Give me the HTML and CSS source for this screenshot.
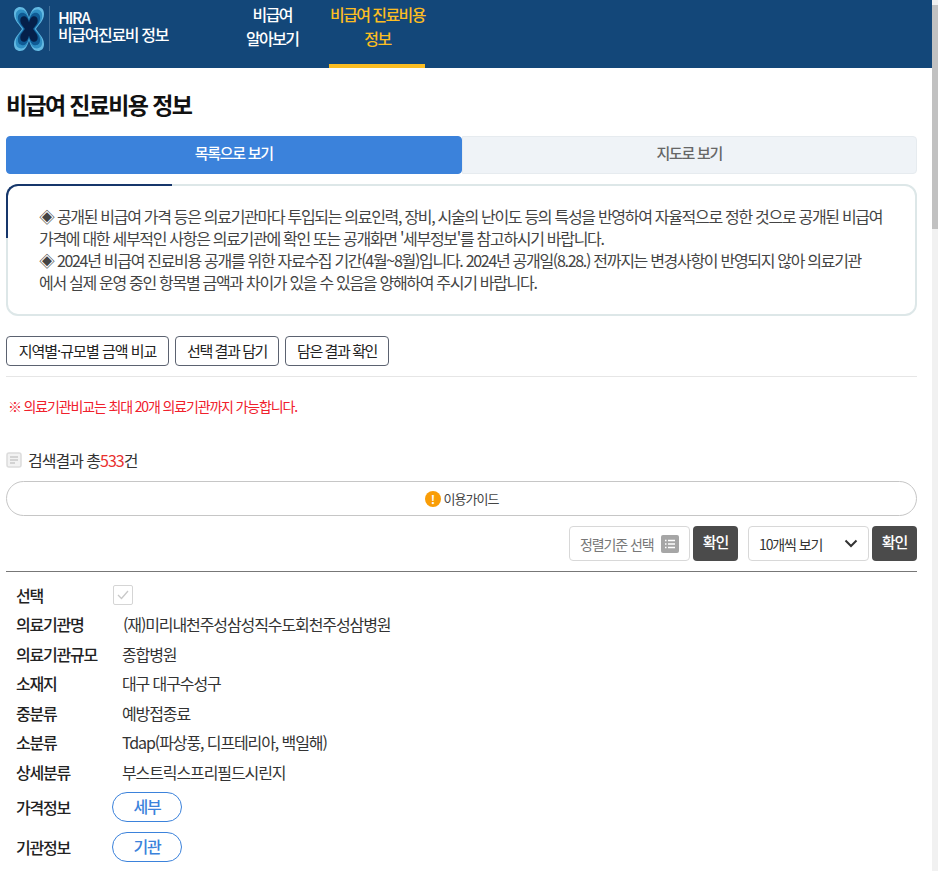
FILE: index.html
```html
<!DOCTYPE html>
<html lang="ko">
<head>
    <meta charset="UTF-8">
    <title>비급여 진료비용 정보</title>
    <link rel="stylesheet" href="styles.css">
</head>
<body>

<header class="top">
    <div class="brand">
        <svg class="logo" width="30" height="44" viewBox="0 0 30 44">
            <defs>
                <path id="lobe" d="M15 22H8C6 18 0 14 0 7 0 2 3 0 6 0c4 0 7 3 9 11z"/>
                <g id="wing">
                    <use href="#lobe" fill="#63b9e2"/>
                    <use href="#lobe" fill="#2f8fc4" transform="translate(1.800 2.600) scale(.88)"/>
                    <use href="#lobe" fill="#0f5a94" transform="translate(3.900 5.700) scale(.74)"/>
                    <use href="#lobe" fill="#05204a" transform="translate(6.300 9.200) scale(.58)"/>
                </g>
            </defs>
            <use href="#wing"/>
            <use href="#wing" transform="matrix(-1 0 0 1 30 0)"/>
            <use href="#wing" transform="matrix(1 0 0 -1 0 44)"/>
            <use href="#wing" transform="matrix(-1 0 0 -1 30 44)"/>
        </svg>
        <div class="brand-name">HIRA<br>비급여진료비 정보</div>
    </div>
    <nav class="menu">
        <a class="menu-item">비급여<br>알아보기</a>
        <a class="menu-item on">비급여 진료비용<br>정보</a>
    </nav>
</header>

<main class="content">
    <h1>비급여 진료비용 정보</h1>

    <div class="tabs">
        <a class="tab active">목록으로 보기</a>
        <a class="tab">지도로 보기</a>
    </div>

    <div class="notice">
        <p>◈ 공개된 비급여 가격 등은 의료기관마다 투입되는 의료인력, 장비, 시술의 난이도 등의 특성을 반영하여 자율적으로 정한 것으로 공개된 비급여 가격에 대한 세부적인 사항은 의료기관에 확인 또는 공개화면 '세부정보'를 참고하시기 바랍니다.</p>
        <p>◈ 2024년 비급여 진료비용 공개를 위한 자료수집 기간(4월~8월)입니다. 2024년 공개일(8.28.) 전까지는 변경사항이 반영되지 않아 의료기관<br>에서 실제 운영 중인 항목별 금액과 차이가 있을 수 있음을 양해하여 주시기 바랍니다.</p>
    </div>

    <div class="actions">
        <button class="btn-line btn-wide">지역별·규모별 금액 비교</button>
        <button class="btn-line">선택 결과 담기</button>
        <button class="btn-line">담은 결과 확인</button>
    </div>

    <p class="warn">※ 의료기관비교는 최대 20개 의료기관까지 가능합니다.</p>

    <div class="total">
        <svg width="16" height="16" viewBox="0 0 16 16">
            <rect x="1" y="1" width="14" height="14" rx="2" fill="#f2f2f2" stroke="#dcdcdc" stroke-width="1.5"/>
            <path d="M4 5h8M4 8h8M4 11h5" stroke="#c9c9c9" stroke-width="1.5"/>
        </svg>
        <span>검색결과 총<em>533</em>건</span>
    </div>

    <button class="guide"><i class="guide-mark">!</i>이용가이드</button>

    <div class="sort-row">
        <div class="field sort-field">
            <span>정렬기준 선택</span>
            <svg width="18" height="18" viewBox="0 0 18 18">
                <rect width="18" height="18" rx="2" fill="#a6a6a6"/>
                <path d="M4 5.500h1.500M7 5.500h7M4 9h1.500M7 9h7M4 12.500h1.500M7 12.500h7" stroke="#fff" stroke-width="1.300"/>
            </svg>
        </div>
        <button class="btn-dark">확인</button>
        <div class="field count-field">
            <span>10개씩 보기</span>
            <svg width="14" height="9" viewBox="0 0 14 9">
                <path d="M1.500 1.500 7 7l5.500-5.500" fill="none" stroke="#333" stroke-width="2"/>
            </svg>
        </div>
        <button class="btn-dark">확인</button>
    </div>

    <div class="result">
        <div class="row row-check">
            <span class="label">선택</span>
            <span class="check">
                <svg width="12" height="10" viewBox="0 0 12 10">
                    <path d="M1 5l3.500 3.500L11 1" fill="none" stroke="#c8c8c8" stroke-width="1.300"/>
                </svg>
            </span>
        </div>
        <div class="row"><span class="label">의료기관명</span><a class="value name">(재)미리내천주성삼성직수도회천주성삼병원</a></div>
        <div class="row"><span class="label">의료기관규모</span><span class="value">종합병원</span></div>
        <div class="row"><span class="label">소재지</span><span class="value">대구 대구수성구</span></div>
        <div class="row"><span class="label">중분류</span><span class="value">예방접종료</span></div>
        <div class="row"><span class="label">소분류</span><span class="value">Tdap(파상풍, 디프테리아, 백일해)</span></div>
        <div class="row"><span class="label">상세분류</span><span class="value">부스트릭스프리필드시린지</span></div>
        <div class="row row-pill"><span class="label">가격정보</span><button class="pill">세부</button></div>
        <div class="row row-pill"><span class="label">기관정보</span><button class="pill">기관</button></div>
    </div>
</main>

<div class="scrollbar"><div class="scroll-thumb"></div></div>

</body>
</html>
```

FILE: styles.css
```css
* {
    box-sizing: border-box;
}
html, body {
    height: 871px;
    overflow: hidden;
}
body {
    margin: 0;
    width: 932px;
    font-family: "Noto Sans CJK KR", "Noto Sans", sans-serif;
    font-size: 16px;
    letter-spacing: -1.100px;
    color: #222;
    background: #fff;
}
button {
    font-family: inherit;
    letter-spacing: inherit;
    cursor: pointer;
}

/* top bar */
.top {
    display: flex;
    height: 68px;
    background: #134779;
    color: #fff;
}
.brand {
    display: flex;
    align-items: center;
    width: 246px;
    padding: 0 0 11px 14px;
}
.logo {
    flex: none;
}
.brand-name {
    margin-left: 5px;
    padding: 3px 0 0 8px;
    border-left: 1px solid #3f6c96;
    height: 45px;
    font-size: 16px;
    font-weight: 500;
    line-height: 17px;
    letter-spacing: -1.350px;
}
.menu {
    display: flex;
    gap: 31px;
}
.menu-item {
    display: block;
    padding-top: 2px;
    text-align: center;
    font-size: 16px;
    font-weight: 500;
    line-height: 24px;
    letter-spacing: -1.600px;
}
.menu-item.on {
    width: 96px;
    color: #fbbd22;
    border-bottom: 4px solid #fbbd22;
    white-space: nowrap;
}

/* content */
.content {
    padding: 0 15px 0 6px;
}
h1 {
    margin: 0;
    padding-top: 20px;
    height: 68px;
    font-size: 23px;
    font-weight: 700;
    line-height: 32px;
    color: #111;
    letter-spacing: -1.650px;
}
.tabs {
    display: flex;
}
.tab {
    flex: 1;
    height: 38px;
    line-height: 31px;
    text-align: center;
    font-size: 15px;
    font-weight: 500;
    letter-spacing: -1.300px;
    color: #666;
    background: #eff3f7;
    border: 1px solid #e6ebef;
    border-radius: 0 4px 4px 0;
}
.tab.active {
    color: #fff;
    background: #3b82db;
    border-color: #3b82db;
    border-radius: 4px;
}

.notice {
    position: relative;
    height: 132px;
    margin-top: 10px;
    padding: 19px 30px 0 31px;
    border: 2px solid #dde7e8;
    border-radius: 12px;
    font-size: 16px;
    line-height: 22px;
    letter-spacing: -1.300px;
    color: #444;
}
.notice::before {
    content: "";
    position: absolute;
    left: -2px;
    top: -2px;
    width: 164px;
    height: 52px;
    border-top: 2px solid #16366b;
    border-left: 2px solid #16366b;
    border-top-left-radius: 12px;
}
.notice p {
    margin: 0;
}

.actions {
    display: flex;
    gap: 6px;
    margin-top: 20px;
    padding-bottom: 10px;
    border-bottom: 1px solid #e6e6e6;
}
.btn-line {
    width: 104px;
    height: 30px;
    padding: 0 0 2px;
    border: 1px solid #5b6270;
    border-radius: 4px;
    background: #fff;
    font-size: 15px;
    letter-spacing: -1.400px;
    color: #222;
}
.btn-wide {
    width: 163px;
    letter-spacing: -1px;
}
.warn {
    margin: 19px 0 0 2px;
    height: 20px;
    font-size: 14px;
    letter-spacing: -1.150px;
    line-height: 20px;
    color: #f0202c;
}
.total {
    display: flex;
    align-items: center;
    gap: 6px;
    margin-top: 33px;
    height: 22px;
    font-size: 16px;
    letter-spacing: -1px;
    color: #333;
}
.total em {
    font-style: normal;
    color: #e8302e;
}
.guide {
    display: flex;
    align-items: center;
    justify-content: center;
    gap: 3px;
    width: 100%;
    height: 35px;
    margin-top: 10px;
    padding-bottom: 2px;
    border: 1px solid #c6c6c6;
    border-radius: 18px;
    background: #fff;
    font-size: 13px;
    letter-spacing: -1px;
    color: #444;
}
.guide-mark {
    width: 16px;
    height: 16px;
    margin-top: 2px;
    border-radius: 50%;
    background: #f99d07;
    color: #fff;
    font-style: normal;
    font-weight: 700;
    font-size: 12px;
    line-height: 16px;
    text-align: center;
}
.sort-row {
    display: flex;
    justify-content: flex-end;
    margin-top: 10px;
    padding-bottom: 10px;
    border-bottom: 1px solid #777;
}
.field {
    display: flex;
    align-items: center;
    justify-content: space-between;
    width: 121px;
    height: 35px;
    border: 1px solid #d8d8d8;
    border-radius: 4px;
    font-size: 14px;
    letter-spacing: -1.100px;
}
.sort-field {
    padding: 0 10px;
    color: #777;
}
.count-field {
    margin-left: 10px;
    padding: 0 10px;
    color: #333;
}
.btn-dark {
    width: 45px;
    height: 35px;
    margin-left: 3px;
    padding-bottom: 5px;
    border: none;
    border-radius: 4px;
    background: #4b4b4b;
    color: #fff;
    font-size: 15px;
    font-weight: 500;
    letter-spacing: -1px;
}

/* result rows */
.result {
    padding: 7.500px 0 0 10px;
}
.row {
    display: flex;
    align-items: center;
    height: 29.500px;
}
.label {
    width: 106px;
    flex: none;
    font-weight: 500;
    letter-spacing: -1.200px;
    color: #222;
}
.value {
    color: #333;
}
.name {
    margin-left: 1px;
}
.row-check {
    height: 30px;
}
.check {
    display: flex;
    align-items: center;
    justify-content: center;
    width: 20px;
    height: 20px;
    margin-left: -9px;
    border: 1px solid #d5d5d5;
    border-radius: 2px;
}
.row-pill {
    height: 40px;
}
.pill {
    width: 70px;
    height: 30px;
    margin-left: -10px;
    padding-bottom: 3px;
    border: 1px solid #3b82db;
    border-radius: 15px;
    background: #fff;
    color: #3b82db;
    font-size: 16px;
    font-weight: 500;
}

/* page scrollbar as it shows in the shot */
.scrollbar {
    position: fixed;
    top: 0;
    right: 0;
    width: 6px;
    height: 871px;
    background: #f1f1f1;
}
.scroll-thumb {
    height: 224px;
    margin-top: 5px;
    background: #c1c1c1;
}
```
